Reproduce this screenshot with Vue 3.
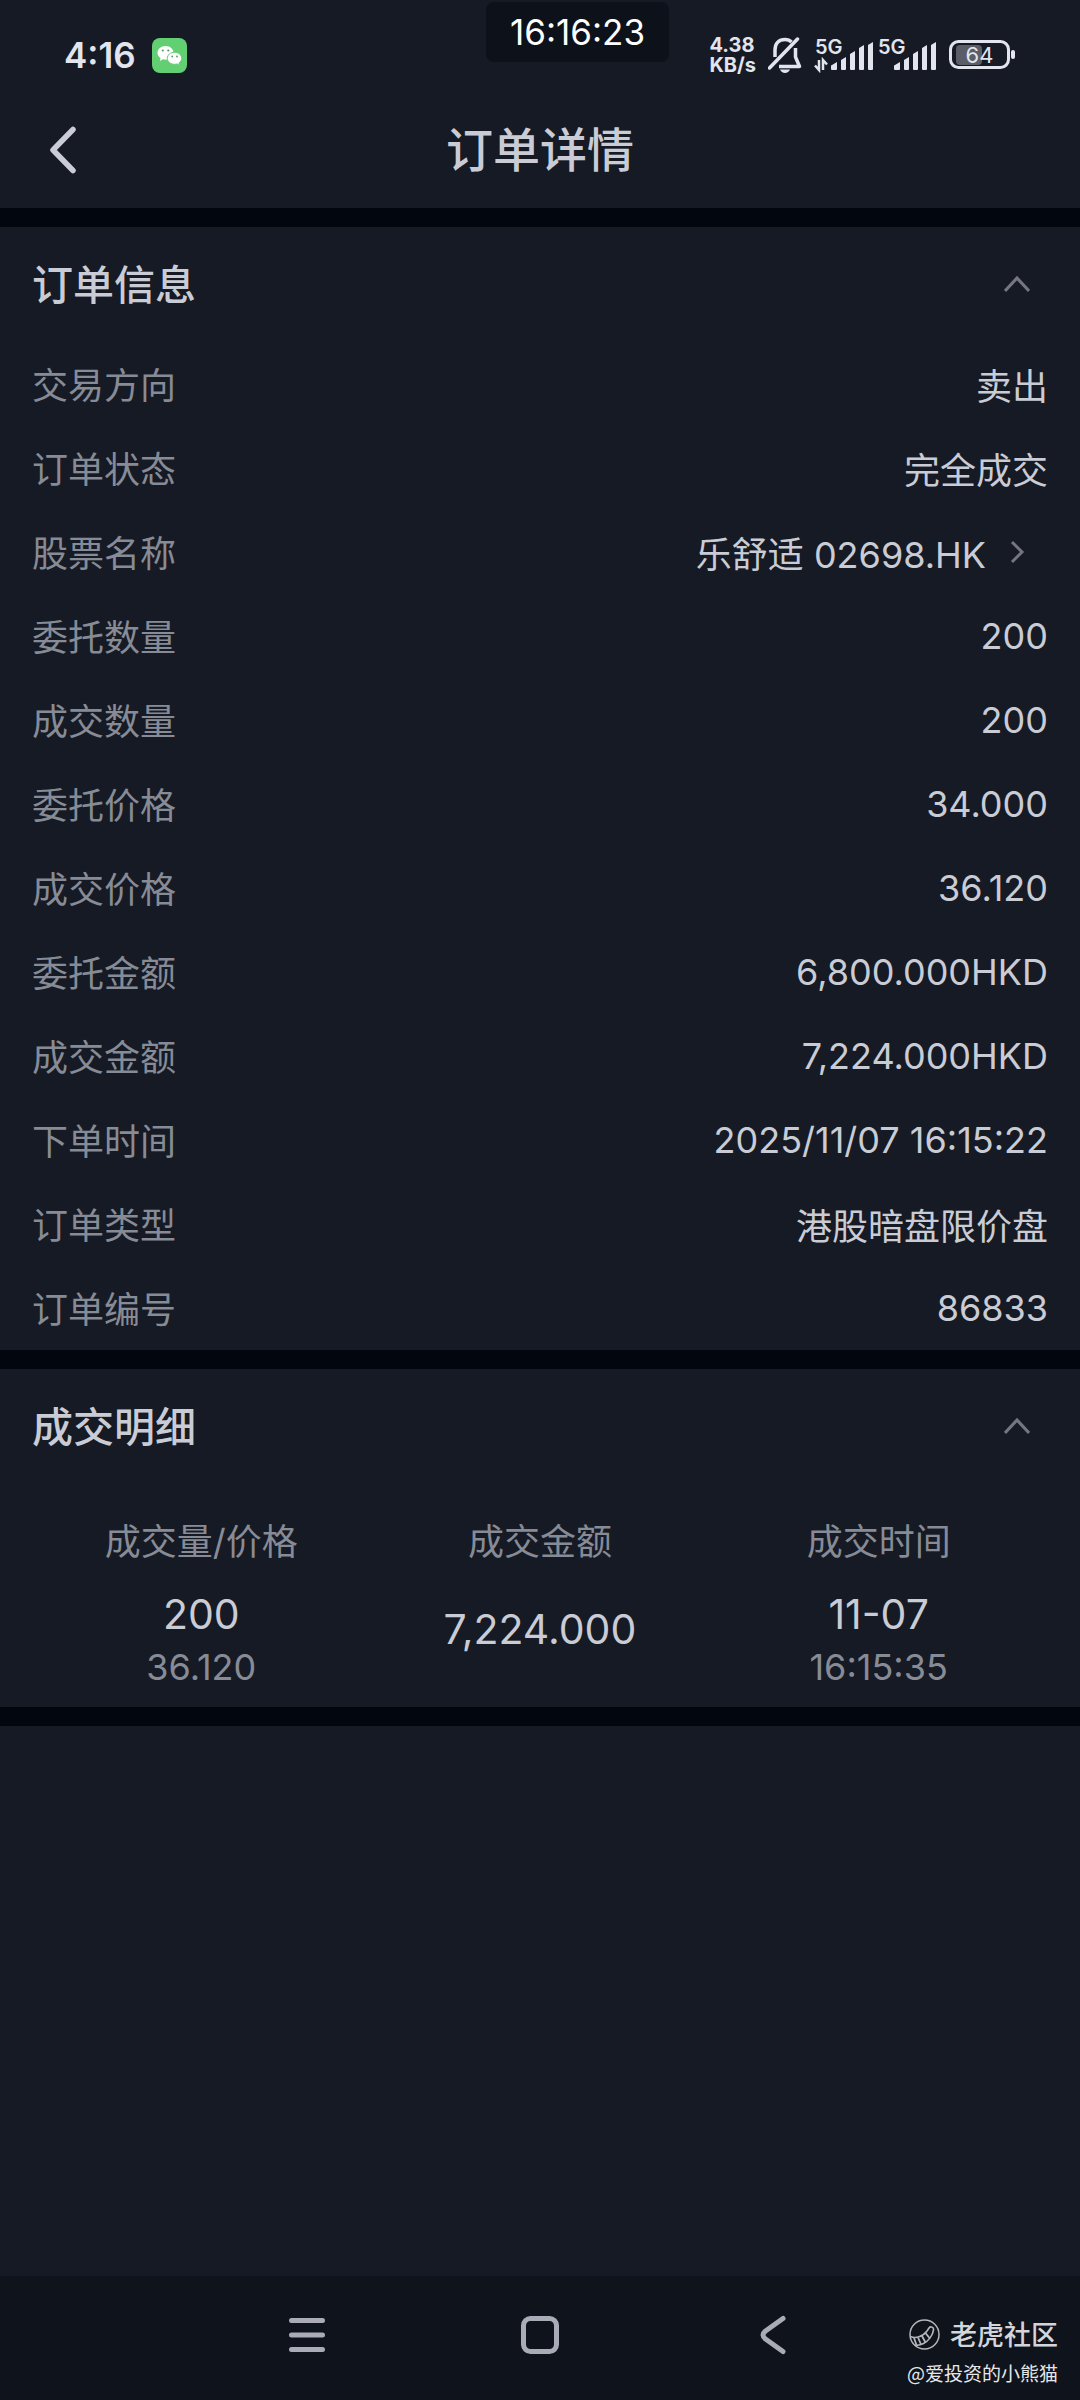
<script setup>
import { ref } from 'vue'

const infoOpen = ref(true)
const dealsOpen = ref(true)

const rows = [
  { label: '交易方向', value: '卖出' },
  { label: '订单状态', value: '完全成交' },
  { label: '股票名称', value: '乐舒适 02698.HK', link: true },
  { label: '委托数量', value: '200' },
  { label: '成交数量', value: '200' },
  { label: '委托价格', value: '34.000' },
  { label: '成交价格', value: '36.120' },
  { label: '委托金额', value: '6,800.000HKD' },
  { label: '成交金额', value: '7,224.000HKD' },
  { label: '下单时间', value: '2025/11/07 16:15:22' },
  { label: '订单类型', value: '港股暗盘限价盘' },
  { label: '订单编号', value: '86833' },
]

const deals = [
  { volume: '200', price: '36.120', amount: '7,224.000', date: '11-07', time: '16:15:35' },
]
</script>

<template>
  <div class="page">
    <div class="status">
      <div class="status-left">
        <span class="clock">4:16</span>
        <svg class="wechat" viewBox="0 0 35 35" aria-hidden="true">
          <rect width="35" height="35" rx="8" fill="#62cf72" />
          <path d="M13.500 8C9 8 5.500 11 5.500 14.800c0 2.200 1.200 4.100 3 5.300l-.6 2.800 3-1.600c.8.2 1.700.4 2.600.4 4.500 0 8-3 8-6.900S18 8 13.500 8z" fill="#fff" />
          <path d="M22.500 14.300c-4 0-7.200 2.600-7.200 6s3.200 6 7.200 6c.9 0 1.700-.1 2.500-.4l2.500 1.400-.5-2.400c1.600-1.100 2.700-2.700 2.700-4.600 0-3.400-3.200-6-7.200-6z" fill="#fff" stroke="#62cf72" stroke-width="1" />
          <g fill="#4f9d60">
            <circle cx="10.800" cy="12.500" r="1.100" /><circle cx="16.300" cy="12.500" r="1.100" />
            <circle cx="20.200" cy="18.500" r="0.900" /><circle cx="25" cy="18.500" r="0.900" />
          </g>
        </svg>
      </div>
      <div class="status-right">
        <div class="speed"><span>4.38</span><span>KB/s</span></div>
        <svg class="bell" viewBox="0 0 34 36" aria-hidden="true">
          <g fill="none" stroke="#e2e5ee" stroke-width="3.500" stroke-linejoin="round">
            <path d="M7 20V13C7 6 11 2.500 17 2.500c3 0 5 1 6.500 2.500" />
            <path d="M27.500 11v9l4 9.500H11" />
            <path d="M1.500 31L29.500 2" stroke-linecap="round" />
          </g>
          <path d="M12 32.500h10c-1 2.300-2.700 3.500-5 3.500s-4-1.200-5-3.500z" fill="#e2e5ee" />
        </svg>
        <div class="signals">
          <div v-for="n in 2" :key="n" class="signal">
            <svg viewBox="0 0 60 36" aria-hidden="true">
              <g fill="#e2e5ee">
                <path d="M17 32v-3q0-1 1-1l5-3v7q0 1-1 1h-4q-1 0-1-1z" />
                <path d="M27 32V23l5-3v12q0 1-1 1h-3q-1 0-1-1z" />
                <path d="M36 32V17l5-3v18q0 1-1 1h-3q-1 0-1-1z" />
                <path d="M45 32V11l5-3v24q0 1-1 1h-3q-1 0-1-1z" />
                <path d="M54 32V8l5-3v27q0 1-1 1h-3q-1 0-1-1z" />
              </g>
              <path v-if="n === 1" d="M5 23v10L1 28.500M9 33V23l4 4.500" fill="none" stroke="#e2e5ee" stroke-width="2.500" />
            </svg>
            <span class="gen">5G</span>
          </div>
        </div>
        <div class="battery">
          <svg viewBox="0 0 67 30" aria-hidden="true">
            <rect x="7" y="5" width="26" height="20" rx="4" fill="#5b5e66" />
            <rect x="1.500" y="1.500" width="58" height="26" rx="8" fill="none" stroke="#e2e5ee" stroke-width="3" />
            <rect x="62" y="10" width="4" height="9" rx="2" fill="#e2e5ee" />
          </svg>
          <span class="level">64</span>
        </div>
      </div>
      <div class="timer">16:16:23</div>
    </div>

    <header class="bar">
      <button class="back" type="button" aria-label="返回">
        <svg width="30" height="50" viewBox="0 0 30 50">
          <path d="M25 4.500L5 25l20 20.500" fill="none" stroke="#cacdd5" stroke-width="5.500" stroke-linecap="round" stroke-linejoin="round" />
        </svg>
      </button>
      <h1>订单详情</h1>
    </header>

    <main>
      <section class="card">
        <h2>
          <button type="button" class="toggle" :aria-expanded="infoOpen" @click="infoOpen = !infoOpen">
            <span>订单信息</span>
            <svg class="chev" :class="{ shut: !infoOpen }" viewBox="0 0 26 26"><path d="M1 19L13 6l12 13" /></svg>
          </button>
        </h2>
        <dl v-show="infoOpen">
          <div v-for="row in rows" :key="row.label" class="row">
            <dt>{{ row.label }}</dt>
            <dd>
              <a v-if="row.link" href="#">
                <span>{{ row.value }}</span>
                <svg class="chev" viewBox="0 0 26 26"><path d="M8 3l10 10L8 23" /></svg>
              </a>
              <template v-else>{{ row.value }}</template>
            </dd>
          </div>
        </dl>
      </section>

      <section class="card">
        <h2>
          <button type="button" class="toggle" :aria-expanded="dealsOpen" @click="dealsOpen = !dealsOpen">
            <span>成交明细</span>
            <svg class="chev" :class="{ shut: !dealsOpen }" viewBox="0 0 26 26"><path d="M1 19L13 6l12 13" /></svg>
          </button>
        </h2>
        <table v-show="dealsOpen">
          <thead>
            <tr><th>成交量/价格</th><th>成交金额</th><th>成交时间</th></tr>
          </thead>
          <tbody>
            <tr v-for="deal in deals" :key="deal.time">
              <td><div class="main">{{ deal.volume }}</div><div class="sub">{{ deal.price }}</div></td>
              <td><div class="main amount">{{ deal.amount }}</div></td>
              <td><div class="main">{{ deal.date }}</div><div class="sub">{{ deal.time }}</div></td>
            </tr>
          </tbody>
        </table>
      </section>
    </main>

    <nav class="nav">
      <button type="button" aria-label="最近任务">
        <svg width="40" height="40" viewBox="0 0 40 40"><path d="M4.500 5.500h31M4.500 20h31M4.500 34.500h31" /></svg>
      </button>
      <button type="button" aria-label="主页">
        <svg width="40" height="40" viewBox="0 0 40 40"><rect x="3.500" y="3.500" width="33" height="33" rx="7" /></svg>
      </button>
      <button type="button" aria-label="后退">
        <svg width="40" height="40" viewBox="0 0 40 40"><path d="M30 3.500L12.500 16q-5 4 0 8L30 36.500" /></svg>
      </button>
      <div class="mark">
        <div class="brand">
          <svg width="31" height="31" viewBox="0 0 31 31" fill="none" stroke="#b4b6bc" aria-hidden="true">
            <circle cx="15.500" cy="15.500" r="14.500" stroke-width="1.500" />
            <path d="M1.500 17.500c5 2.200 12 .5 16.500-5.500l2-3c1.500-2 5-1 4.500 2-.8 5.500-5 11-10 13.500-3 1.500-6 2-8.500 1.500" stroke-width="1.600" />
            <path d="M5 19l2.500 7M9 18.500l3 7M13 17l3.500 6.500M16.500 14l4 5" stroke-width="1.800" />
          </svg>
          <span>老虎社区</span>
        </div>
        <div class="author">@爱投资的小熊猫</div>
      </div>
    </nav>
  </div>
</template>

<style>
body {
  margin: 0;
  background: #161a24;
}
</style>

<style scoped>
.page {
  display: flex;
  flex-direction: column;
  min-height: 100vh;
  background: #161a24;
  color: #c9ccd5;
  font-family: Inter, "Noto Sans CJK SC", sans-serif;
  font-size: 36px;
}

button {
  padding: 0;
  border: 0;
  background: none;
  color: inherit;
  font: inherit;
}

svg {
  display: block;
}

.status {
  position: relative;
  display: flex;
  justify-content: space-between;
  box-sizing: border-box;
  height: 92px;
  padding: 18px 64px 0;
  color: #e2e5ee;
}

.status-left,
.status-right {
  display: flex;
  align-items: center;
}

.status-left {
  gap: 16px;
}

.clock {
  font-size: 35px;
  font-weight: 600;
  line-height: 48px;
}

.wechat {
  width: 35px;
  height: 35px;
}

.status-right {
  gap: 12px;
}

.speed {
  display: flex;
  flex-direction: column;
  font-size: 20px;
  font-weight: 700;
  line-height: 20px;
}

.bell {
  width: 34px;
  height: 36px;
}

.signals {
  display: flex;
  gap: 3px;
}

.signal {
  position: relative;
  width: 60px;
  height: 36px;
}

.gen {
  position: absolute;
  top: 0;
  left: 1px;
  font-size: 20px;
  font-weight: 600;
  line-height: 20px;
}

.battery {
  position: relative;
  width: 67px;
  height: 30px;
}

.level {
  position: absolute;
  inset: 0 6px 0 0;
  font-size: 22px;
  line-height: 30px;
  text-align: center;
}

.timer {
  position: absolute;
  top: 2px;
  left: 50%;
  margin-left: -54px;
  padding: 0 24px;
  border-radius: 8px;
  background: #0c111a;
  color: #fff;
  font-size: 35px;
  line-height: 60px;
}

.bar {
  display: grid;
  grid-template-columns: 1fr auto 1fr;
  align-items: center;
  height: 116px;
  padding: 0 48px;
}

.back {
  justify-self: start;
}

h1 {
  margin: 0;
  font-size: 47px;
  font-weight: 500;
  line-height: 64px;
}

main {
  border-bottom: 19px solid #02060f;
}

.card {
  padding: 0 32px;
  border-top: 19px solid #02060f;
}

h2 {
  margin: 0;
  font-size: 41px;
  font-weight: 500;
}

.toggle {
  display: flex;
  align-items: center;
  justify-content: space-between;
  width: 100%;
  height: 115px;
  padding-right: 18px;
}

.toggle span {
  padding-bottom: 5px;
}

.chev {
  width: 26px;
  height: 26px;
  fill: none;
  stroke: #747781;
  stroke-width: 3;
}

.shut {
  transform: rotate(180deg);
}

dl {
  margin: 0;
}

.row {
  display: flex;
  align-items: center;
  justify-content: space-between;
  height: 84px;
}

dt {
  padding-bottom: 3px;
  color: #878b96;
}

dd {
  margin: 0;
}

dd a {
  display: flex;
  align-items: center;
  gap: 18px;
  padding-right: 18px;
  color: inherit;
  text-decoration: none;
}

table {
  width: 100%;
  border-collapse: collapse;
  table-layout: fixed;
  text-align: center;
}

th {
  padding: 35px 0 23px;
  color: #878b96;
  font-weight: 400;
  line-height: 46px;
}

td {
  padding: 0 0 13px;
  line-height: 53px;
  vertical-align: top;
}

.main {
  font-size: 41px;
}

.amount {
  line-height: 82px;
}

.sub {
  color: #878b96;
}

.nav {
  position: relative;
  display: flex;
  align-items: center;
  justify-content: center;
  gap: 193px;
  box-sizing: border-box;
  height: 124px;
  margin-top: auto;
  padding-bottom: 6px;
  background: #0f131b;
}

.nav button svg {
  fill: none;
  stroke: #a9abb6;
  stroke-width: 5;
  stroke-linecap: round;
  stroke-linejoin: round;
}

.mark {
  position: absolute;
  top: 37px;
  right: 22px;
  color: #d3d5da;
  font-family: "Noto Sans CJK SC", sans-serif;
}

.brand {
  display: flex;
  align-items: center;
  justify-content: flex-end;
  gap: 10px;
  font-size: 27px;
  font-weight: 500;
  line-height: 42px;
}

.author {
  color: #e6e7ea;
  font-size: 19px;
  line-height: 36px;
  text-align: right;
}
</style>
